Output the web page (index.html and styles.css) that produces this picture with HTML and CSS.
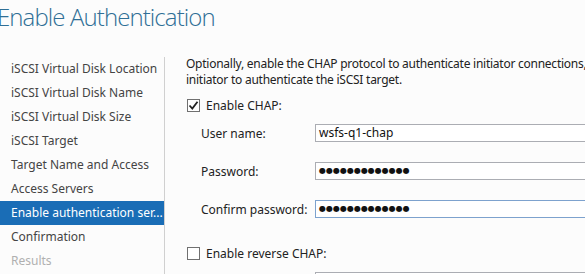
FILE: index.html
```html
<!DOCTYPE html>
<html lang="en">
<head>
    <meta charset="UTF-8">
    <title>New iSCSI Virtual Disk Wizard</title>
    <link rel="stylesheet" href="styles.css">
</head>
<body>

<div class="wizard">
    <h1 class="title">Enable Authentication</h1>

    <div class="body">
        <!-- Шаги мастера -->
        <ul class="steps">
            <li>iSCSI Virtual Disk Location</li>
            <li>iSCSI Virtual Disk Name</li>
            <li>iSCSI Virtual Disk Size</li>
            <li>iSCSI Target</li>
            <li>Target Name and Access</li>
            <li>Access Servers</li>
            <li class="active">Enable authentication ser...</li>
            <li>Confirmation</li>
            <li class="disabled">Results</li>
        </ul>

        <!-- Содержимое страницы -->
        <div class="content">
            <p class="intro">Optionally, enable the CHAP protocol to authenticate initiator connections, or enable reverse CHAP to allow the<br>initiator to authenticate the iSCSI target.</p>

            <label class="check">
                <span class="box checked">
                    <svg width="11" height="11" viewBox="0 0 11 11"><path d="M1.5 5.5 L4.3 8.5 L9.5 1.8" fill="none" stroke="#222" stroke-width="1.8"/></svg>
                </span>
                Enable CHAP:
            </label>

            <div class="fields">
                <div class="field">
                    <span class="label">User name:</span>
                    <div class="input">wsfs-q1-chap</div>
                </div>
                <div class="field">
                    <span class="label">Password:</span>
                    <div class="input dots">●●●●●●●●●●●●●</div>
                </div>
                <div class="field">
                    <span class="label">Confirm password:</span>
                    <div class="input dots focus">●●●●●●●●●●●●●</div>
                </div>
            </div>

            <label class="check reverse">
                <span class="box"></span>
                Enable reverse CHAP:
            </label>

            <div class="fields">
                <div class="field">
                    <span class="label">User name:</span>
                    <div class="input"></div>
                </div>
            </div>
        </div>
    </div>
</div>

</body>
</html>
```

FILE: styles.css
```css
html, body {
    margin: 0;
    height: 100%;
    overflow: hidden;
}
body {
    background-color: #fcfcfc;
    font-family: "Noto Sans", "Open Sans", sans-serif;
    font-size: 12px;
    color: #333;
}
.wizard {
    width: 585px;
    height: 274px;
    overflow: hidden;
}
.title {
    margin: 0;
    padding: 1px 0 0 0;
    margin-left: -3px;
    height: 57px;
    box-sizing: border-box;
    font-family: "Open Sans", "Noto Sans", sans-serif;
    font-weight: 300;
    font-size: 24px;
    letter-spacing: -0.9px;
    line-height: 32px;
    color: #2f6f96;
    white-space: nowrap;
}
.body {
    display: flex;
    height: 217px;
}
.steps {
    list-style: none;
    margin: 0;
    padding: 0;
    width: 165px;
    flex-shrink: 0;
    border-right: 1px solid #d0d0d0;
    box-sizing: border-box;
}
.steps li {
    height: 24px;
    line-height: 24px;
    padding-left: 11px;
    color: #444;
    white-space: nowrap;
}
.steps li.active {
    background-color: #1a6db6;
    color: #fff;
}
.steps li.disabled {
    color: #b0b0b0;
}
.content {
    padding-left: 21px;
    flex-shrink: 0;
    width: 700px;
}
.intro {
    margin: 0;
    margin-top: -1px;
    line-height: 16px;
    letter-spacing: -0.25px;
    color: #222;
    white-space: nowrap;
}
.check {
    display: flex;
    align-items: center;
    gap: 6px;
    height: 16px;
    margin-top: 9px;
    margin-left: 1px;
    color: #222;
}
.check.reverse {
    margin-top: 27px;
}
.box {
    width: 13px;
    height: 13px;
    box-sizing: border-box;
    border: 1px solid #707070;
    background-color: #fff;
    display: flex;
    align-items: center;
    justify-content: center;
}
.fields {
    padding-left: 15px;
    margin-top: 11px;
    display: flex;
    flex-direction: column;
    gap: 20px;
}
.field {
    display: flex;
    align-items: center;
    height: 18px;
}
.label {
    width: 114px;
    flex-shrink: 0;
    color: #222;
}
.input {
    width: 320px;
    height: 18px;
    box-sizing: border-box;
    border: 1px solid #abadb3;
    background-color: #fff;
    padding-left: 3px;
    line-height: 16px;
    color: #111;
    white-space: nowrap;
}
.input.focus {
    border-color: #7da2ce;
}
.dots {
    font-family: "DejaVu Sans", sans-serif;
    font-size: 8px;
}
```
